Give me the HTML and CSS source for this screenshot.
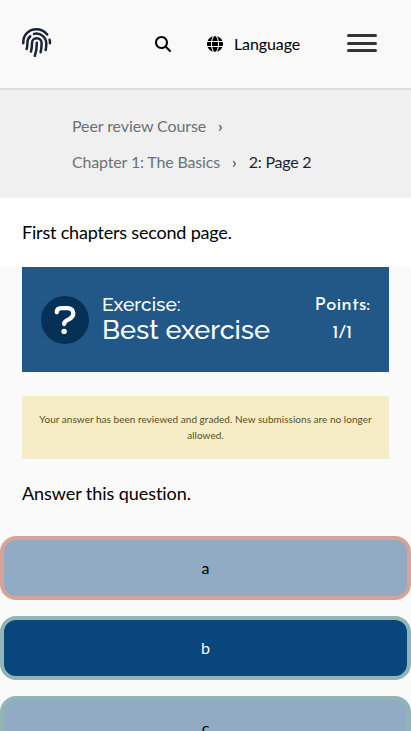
FILE: index.html
```html
<!DOCTYPE html>
<html lang="en">
<head>
<meta charset="utf-8">
<title>2: Page 2</title>
<link rel="stylesheet" href="styles.css">
</head>
<body>
<header class="topbar">
  <svg class="logo" viewBox="0 0 30 30" aria-hidden="true">
    <path d="M1.300 15.200C.9 7 6.700 1.300 14.500 1.300c4.400 0 8 1.800 10.700 5.200M27.600 11.800c.4 1.200.5 2.200.3 3.400M12 5.900c6.800-1.500 12.300 3.500 12.300 9.800 0 2.300-.1 4.200-.6 6.300M8.300 8.200C6.200 9.900 5.400 12.100 5.400 15c0 2.200-.2 4-.7 6M9 23.500c.8-2.800 1-5.500 1-8.500 0-2.800 2-4.700 4.700-4.700 2.900 0 4.900 2 4.900 4.900 0 3.200-.3 6-1 9M14.800 14.800c.1 4.500-.5 8.600-2 13"/>
  </svg>
  <svg class="search" viewBox="0 0 512 512" aria-hidden="true"><path d="M416 208c0 45.900-14.900 88.300-40 122.700L502.600 457.400c12.500 12.500 12.500 32.800 0 45.300s-32.800 12.500-45.300 0L330.700 376c-34.400 25.200-76.800 40-122.700 40C93.100 416 0 322.900 0 208S93.100 0 208 0S416 93.100 416 208zM208 352a144 144 0 1 0 0-288 144 144 0 1 0 0 288z"/></svg>
  <div class="language">
    <svg class="globe" viewBox="0 0 512 512" aria-hidden="true"><path d="M352 256c0 22.200-1.200 43.600-3.300 64H163.300c-2.200-20.400-3.300-41.800-3.300-64s1.200-43.600 3.300-64H348.700c2.200 20.400 3.300 41.800 3.300 64zm28.800-64H503.900c5.300 20.500 8.100 41.900 8.100 64s-2.800 43.500-8.100 64H380.800c2.100-20.600 3.200-42 3.200-64s-1.100-43.400-3.200-64zm112.600-32H376.700c-10-63.900-29.800-117.400-55.300-151.600c78.300 20.700 142 77.500 171.900 151.600zm-149.100 0H167.700c6.100-36.400 15.500-68.600 27-94.700c10.500-23.600 22.200-40.700 33.500-51.500C239.400 3.200 248.700 0 256 0s16.600 3.200 27.800 13.800c11.300 10.800 23 27.900 33.500 51.500c11.600 26 20.900 58.200 27 94.700zm-209 0H18.600C48.600 85.900 112.200 29.100 190.600 8.400C165.100 42.600 145.300 96.100 135.300 160zM8.100 192H131.200c-2.100 20.600-3.200 42-3.200 64s1.100 43.400 3.200 64H8.100C2.800 299.500 0 278.100 0 256s2.800-43.500 8.100-64zM194.700 446.600c-11.600-26-20.900-58.200-27-94.600H344.300c-6.100 36.400-15.500 68.600-27 94.600c-10.500 23.600-22.200 40.700-33.500 51.500C272.600 508.800 263.300 512 256 512s-16.600-3.200-27.800-13.800c-11.300-10.800-23-27.900-33.500-51.500zM135.300 352c10 63.900 29.800 117.400 55.300 151.600C112.200 482.900 48.600 426.100 18.600 352H135.300zm358.100 0c-30 74.100-93.600 130.900-171.900 151.600c25.500-34.200 45.200-87.700 55.300-151.600H493.400z"/></svg>
    <span>Language</span>
  </div>
  <div class="menu"><i></i><i></i><i></i></div>
</header>
<nav class="crumbs">
  <div class="crumb-row course"><span>Peer review Course</span><span class="sep">›</span></div>
  <div class="crumb-row"><span>Chapter 1: The Basics</span><span class="sep">›</span><span class="current">2: Page 2</span></div>
</nav>
<p class="intro">First chapters second page.</p>
<main>
  <section class="banner">
    <svg class="question" viewBox="0 0 48 48" aria-hidden="true">
      <circle class="disc" cx="24" cy="24" r="24"/>
      <path class="hook" d="M15.800 16.300c0-2.700 1.700-4.200 4.500-4.200h6c3.800 0 6 2.100 6 5.200 0 3.200-2 4.900-5 6.300-2.700 1.200-4.200 2-4.200 4.400"/>
      <circle class="dot" cx="23.100" cy="35.400" r="2.700"/>
    </svg>
    <div class="title"><span class="kind">Exercise:</span><span class="name">Best exercise</span></div>
    <div class="points"><span>Points:</span><span>1/1</span></div>
  </section>
  <p class="notice">Your answer has been reviewed and graded. New submissions are no longer allowed.</p>
  <p class="prompt">Answer this question.</p>
  <div class="options">
    <button class="option wrong">a</button>
    <button class="option chosen">b</button>
    <button class="option">c</button>
  </div>
</main>
</body>
</html>
```
FILE: styles.css
```css
* { box-sizing: border-box; }
html { height: 100%; overflow: hidden; }
body { margin: 0; height: 731px; overflow: hidden; background: #fff; color: #000; font-family: Lato, sans-serif; font-size: 16px; }
p { margin: 0; }
.topbar { height: 90px; display: flex; align-items: center; padding: 0 34px 0 22px; background: #f9f9f9; border-bottom: 2px solid #ddd; }
.logo { width: 30px; height: 30px; margin-top: -2px; fill: none; stroke: #1a2333; stroke-width: 2.5; stroke-linecap: round; }
.search { width: 16px; height: 16px; margin-left: 103px; }
.language { display: flex; align-items: center; gap: 11px; margin-left: 36px; letter-spacing: -0.1px; }
.language span { margin-top: -2px; }
.globe { width: 16px; height: 16px; }
.menu { margin-left: auto; width: 30px; display: grid; gap: 4.5px; margin-top: -2px; }
.menu i { height: 3px; border-radius: 2px; background: #333; }
.crumbs { height: 108px; padding: 18px 72px; background: #f0f0f0; color: #6c7078; letter-spacing: -0.16px; }
.crumb-row { display: flex; height: 36px; line-height: 36px; white-space: nowrap; }
.course { letter-spacing: -0.1px; }
.sep { margin: 0 12px; color: #333; }
.current { margin-left: 0.5px; color: #1a2333; letter-spacing: -0.25px; }
.intro { height: 69px; padding: 0 22px; line-height: 69px; font-size: 18px; letter-spacing: -0.19px; }
main { height: 464px; background: #fafafa; }
.banner { height: 105px; margin: 0 22px; padding: 0 19px; display: flex; align-items: center; background: #215887; color: #fff; }
.question { width: 48px; height: 48px; }
.disc { fill: #063157; }
.hook { fill: none; stroke: #fff; stroke-width: 4.3; stroke-linecap: round; }
.dot { fill: #fff; }
.title { display: flex; flex-direction: column; margin: -2px 0 0 13px; font-family: Raleway, Lato, sans-serif; font-weight: 500; white-space: nowrap; }
.kind { font-size: 19.2px; line-height: 22px; }
.name { font-size: 27px; line-height: 30px; }
.points { display: flex; flex-direction: column; align-items: center; margin-left: auto; font-family: "Josefin Sans", Lato, sans-serif; font-size: 19.2px; line-height: 28px; }
.notice { height: 63px; margin: 24px 22px 0; padding: 15px 12px; background: #f6edc6; color: #594d21; font-size: 10px; line-height: 16px; letter-spacing: 0.025px; text-align: center; }
.prompt { padding: 0 22px; height: 77px; line-height: 69px; font-size: 18px; letter-spacing: -0.06px; }
.options { display: grid; gap: 16px; }
.option { height: 64px; width: 100%; padding: 0 0 2px; border: 4px solid #90b5b2; border-radius: 16px; background: #91abc5; color: #000; font: 16px Lato, sans-serif; }
.wrong { border-color: #d6a497; }
.chosen { background: #08467b; color: #fff; }
```
